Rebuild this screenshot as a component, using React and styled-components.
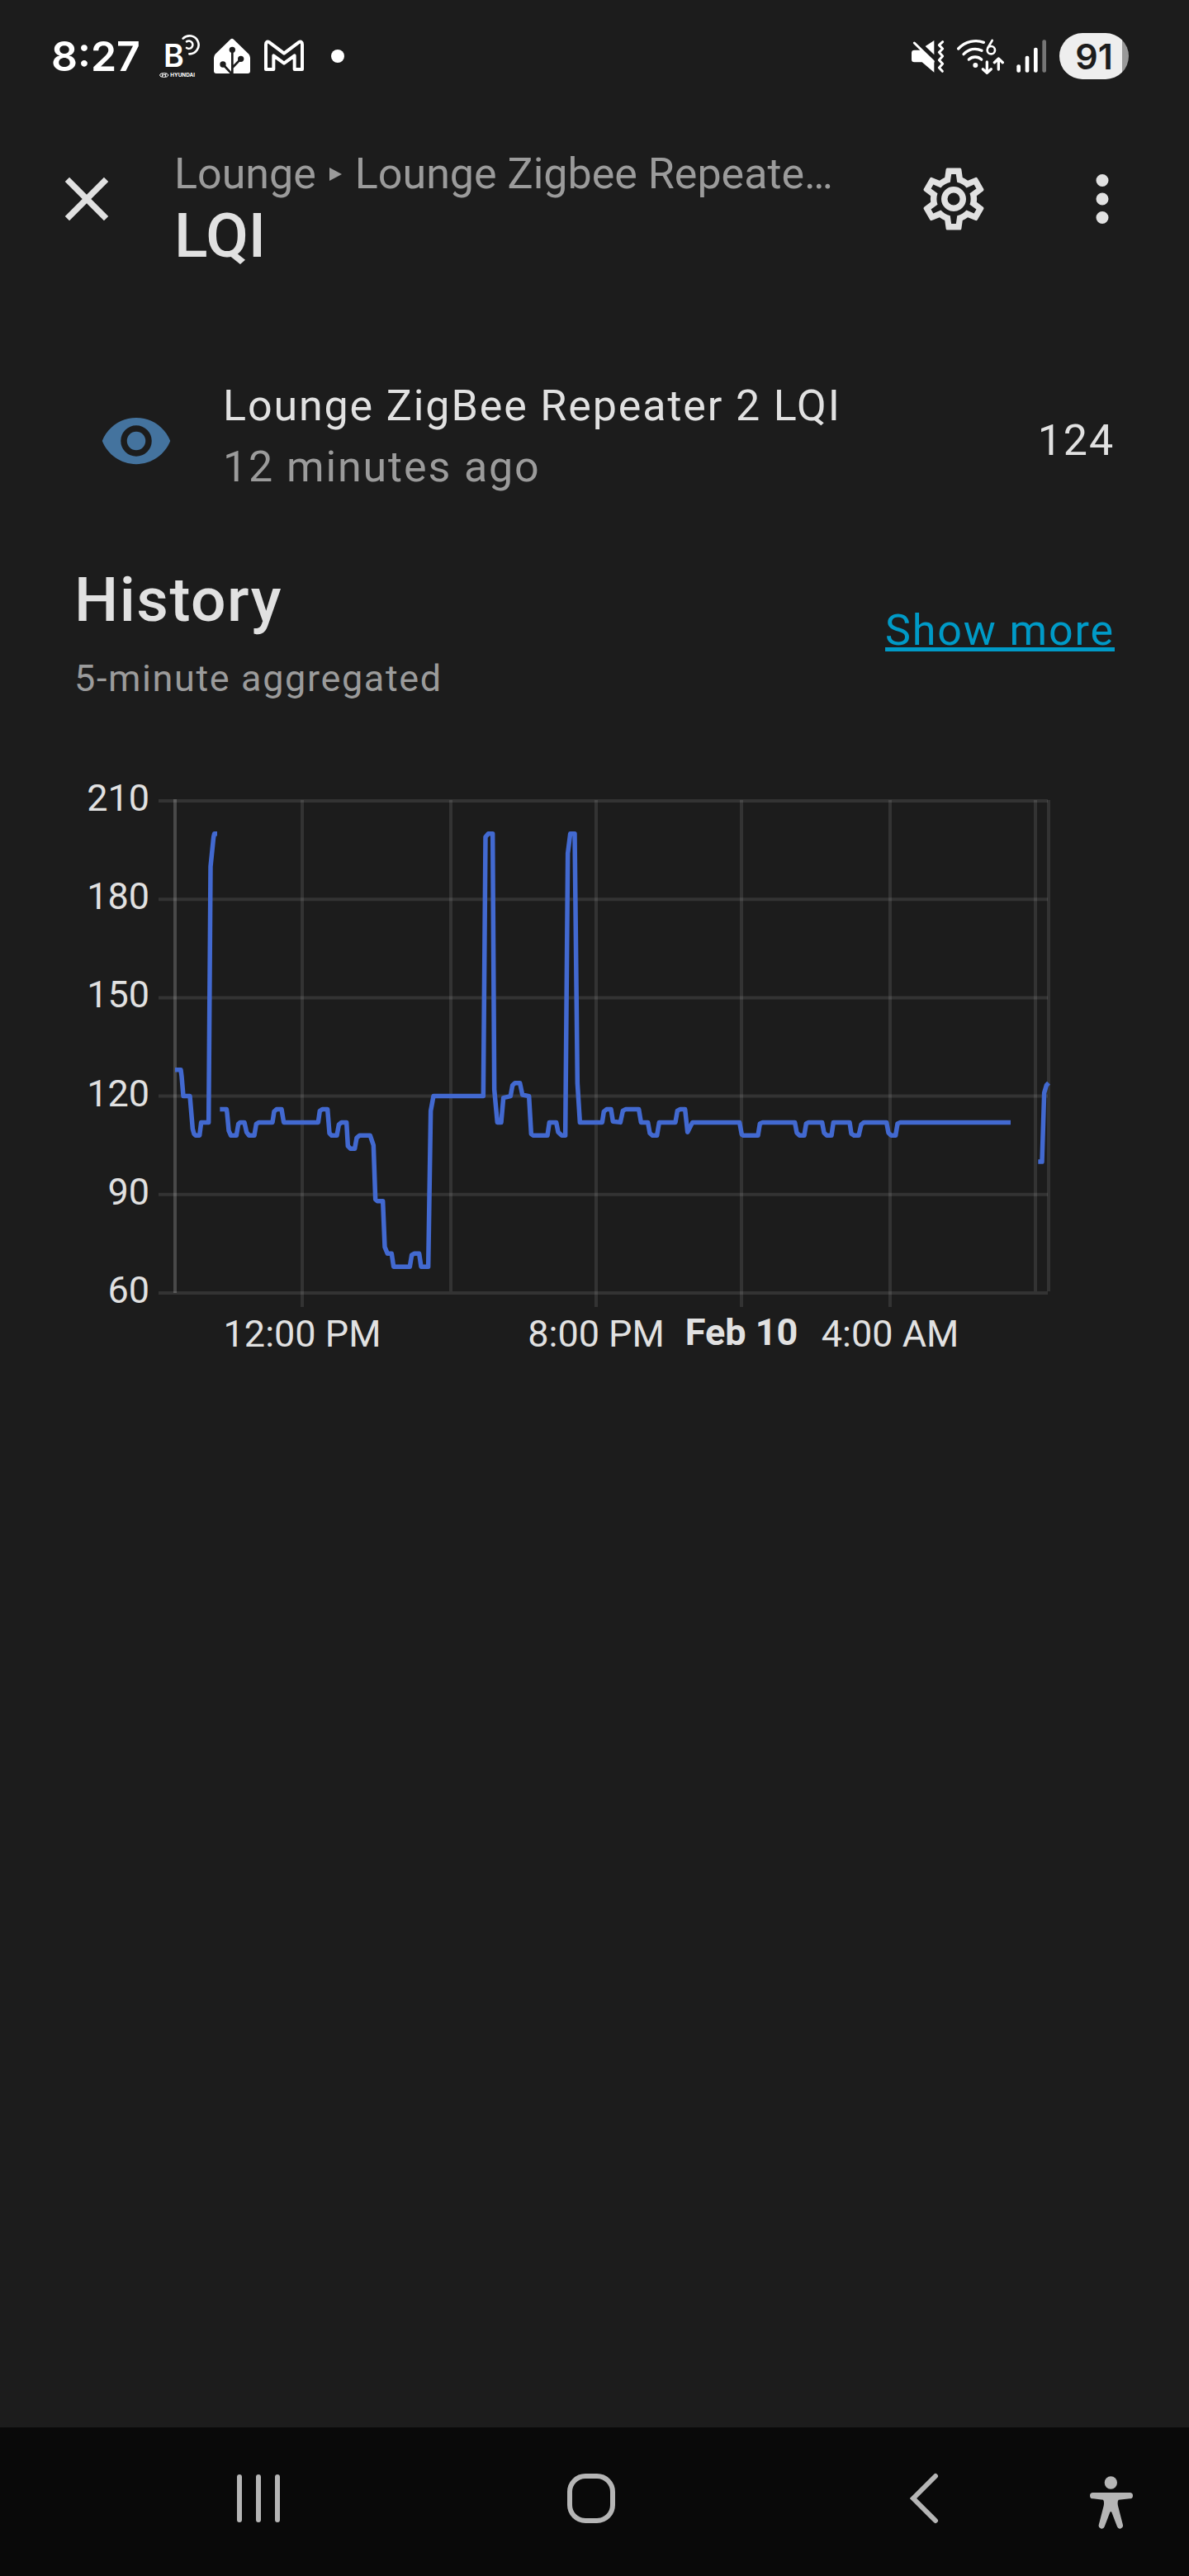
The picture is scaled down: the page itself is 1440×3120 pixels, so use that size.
import styled, { createGlobalStyle } from "styled-components";

const GlobalStyle = createGlobalStyle`
  * {
    box-sizing: border-box;
  }
  body {
    margin: 0;
    background: #1c1c1c;
    color: #e1e1e1;
    font-family: Roboto, sans-serif;
  }
`;

const Screen = styled.div`
  min-height: 100vh;
  display: flex;
  flex-direction: column;
`;

const StatusBar = styled.div`
  height: 136px;
  padding: 0 73px 0 62px;
  display: flex;
  align-items: center;
  justify-content: space-between;
  color: #fff;
`;

const StatusGroup = styled.div`
  display: flex;
  align-items: center;
  gap: ${(props) => props.$gap}px;
`;

const Clock = styled.span`
  margin-right: 6px;
  font-family: Inter, sans-serif;
  font-size: 50px;
  font-weight: 600;
  line-height: 56px;
`;

const Dot = styled.span`
  width: 16px;
  height: 16px;
  margin-left: 16px;
  border-radius: 50%;
  background: #fff;
`;

const Battery = styled.span`
  width: 84px;
  height: 56px;
  border-radius: 28px;
  background: linear-gradient(to right, #eee 76px, #999 76px);
  color: #1c1c1c;
  font-family: Inter, sans-serif;
  font-size: 43px;
  font-weight: 600;
  line-height: 56px;
  text-align: center;
`;

const Header = styled.header`
  height: 210px;
  padding: 0 15px;
  display: flex;
  align-items: center;
`;

const IconButton = styled.button`
  width: 180px;
  height: 180px;
  flex: none;
  display: flex;
  align-items: center;
  justify-content: center;
  padding: 0;
  border: none;
  background: none;
  color: inherit;
  cursor: pointer;
`;

const Titles = styled.div`
  flex: 1;
  min-width: 0;
  padding: 16px 16px 0;
`;

const Breadcrumb = styled.div`
  display: flex;
  align-items: center;
  gap: 16px;
  color: #9b9b9b;
  font-size: 52px;
  line-height: 72px;
  white-space: nowrap;
`;

const Title = styled.h1`
  margin: 0;
  font-size: 75px;
  font-weight: 500;
  line-height: 76px;
`;

const Content = styled.main`
  flex: 1;
  padding: 109px 90px 0;
`;

const StateRow = styled.section`
  display: flex;
  align-items: center;
  font-size: 52px;
  line-height: 74px;
  letter-spacing: 0.036em;
`;

const Badge = styled.div`
  width: 150px;
  flex: none;
  display: flex;
  justify-content: center;
  color: #44739e;
`;

const StateInfo = styled.div`
  flex: 1;
  padding: 0 0 10px 30px;
`;

const Ago = styled.div`
  color: #9b9b9b;
`;

const HistoryHead = styled.section`
  margin-top: 55px;
  display: flex;
  align-items: center;
  justify-content: space-between;
`;

const HistoryTitle = styled.h2`
  margin: 0;
  font-size: 75px;
  font-weight: 500;
  line-height: 116px;
  letter-spacing: 0.02em;
`;

const Aggregated = styled.div`
  color: #9b9b9b;
  font-size: 45px;
  line-height: 76px;
  letter-spacing: 0.036em;
`;

const MoreLink = styled.a`
  color: #009ac7;
  font-size: 52px;
  line-height: 74px;
  letter-spacing: 0.036em;
  text-decoration-thickness: 5px;
`;

const ChartSvg = styled.svg`
  display: block;
  width: 100%;
  margin-top: 80px;
  font-size: 45px;
`;

const NavBar = styled.nav`
  height: 180px;
  padding: 0 68px 8px 111px;
  display: grid;
  grid-template-columns: repeat(3, 1fr) 52px;
  align-items: center;
  justify-items: center;
  background: #090909;
`;

const NavButton = styled.button`
  height: 120px;
  display: flex;
  align-items: center;
  padding: 0;
  border: none;
  background: none;
  color: #b5b5b5;
  cursor: pointer;
`;

const ICONS = {
  close:
    "M19,6.41L17.59,5L12,10.59L6.41,5L5,6.41L10.59,12L5,17.59L6.41,19L12,13.41L17.59,19L19,17.59L13.41,12L19,6.41Z",
  cog: "M12,8A4,4 0 0,1 16,12A4,4 0 0,1 12,16A4,4 0 0,1 8,12A4,4 0 0,1 12,8M12,10A2,2 0 0,0 10,12A2,2 0 0,0 12,14A2,2 0 0,0 14,12A2,2 0 0,0 12,10M10,22C9.75,22 9.54,21.82 9.5,21.58L9.13,18.93C8.5,18.68 7.96,18.34 7.44,17.94L4.95,18.95C4.73,19.03 4.46,18.95 4.34,18.73L2.34,15.27C2.21,15.05 2.27,14.78 2.46,14.63L4.57,12.97L4.5,12L4.57,11L2.46,9.37C2.27,9.22 2.21,8.95 2.34,8.73L4.34,5.27C4.46,5.05 4.73,4.96 4.95,5.05L7.44,6.05C7.96,5.66 8.5,5.32 9.13,5.07L9.5,2.42C9.54,2.18 9.75,2 10,2H14C14.25,2 14.46,2.18 14.5,2.42L14.87,5.07C15.5,5.32 16.04,5.66 16.56,6.05L19.05,5.05C19.27,4.96 19.54,5.05 19.66,5.27L21.66,8.73C21.79,8.95 21.73,9.22 21.54,9.37L19.43,11L19.5,12L19.43,13L21.54,14.63C21.73,14.78 21.79,15.05 21.66,15.27L19.66,18.73C19.54,18.95 19.27,19.04 19.05,18.95L16.56,17.95C16.04,18.34 15.5,18.68 14.87,18.93L14.5,21.58C14.46,21.82 14.25,22 14,22H10M11.25,4L10.88,6.61C9.68,6.86 8.62,7.5 7.85,8.39L5.44,7.35L4.69,8.65L6.8,10.2C6.4,11.37 6.4,12.64 6.8,13.8L4.68,15.36L5.43,16.66L7.86,15.62C8.63,16.5 9.68,17.14 10.87,17.38L11.24,20H12.76L13.13,17.39C14.32,17.14 15.37,16.5 16.14,15.62L18.57,16.66L19.32,15.36L17.2,13.81C17.6,12.64 17.6,11.37 17.2,10.2L19.31,8.65L18.56,7.35L16.15,8.39C15.38,7.5 14.32,6.86 13.12,6.62L12.75,4H11.25Z",
  dots: "M12,16A2,2 0 0,1 14,18A2,2 0 0,1 12,20A2,2 0 0,1 10,18A2,2 0 0,1 12,16M12,10A2,2 0 0,1 14,12A2,2 0 0,1 12,14A2,2 0 0,1 10,12A2,2 0 0,1 12,10M12,4A2,2 0 0,1 14,6A2,2 0 0,1 12,8A2,2 0 0,1 10,6A2,2 0 0,1 12,4Z",
  eye: "M12,9A3,3 0 0,0 9,12A3,3 0 0,0 12,15A3,3 0 0,0 15,12A3,3 0 0,0 12,9M12,17A5,5 0 0,1 7,12A5,5 0 0,1 12,7A5,5 0 0,1 17,12A5,5 0 0,1 12,17M12,4.5C7,4.5 2.73,7.61 1,12C2.73,16.39 7,19.5 12,19.5C17,19.5 21.27,16.39 23,12C21.27,7.61 17,4.5 12,4.5Z",
};

const Icon = ({ name }) => (
  <svg width="90" height="90" viewBox="0 0 24 24" fill="currentColor" aria-hidden="true">
    <path d={ICONS[name]} />
  </svg>
);

const BluelinkIcon = () => (
  <svg width="49" height="56" viewBox="0 0 147 168" fill="none" stroke="#fff" aria-hidden="true">
    <text x="15" y="122" fill="#fff" stroke="none" fontFamily="Inter" fontSize="113" fontWeight="600">B</text>
    <path d="M86 20A33 33 0 1 1 109 76" strokeWidth="8" strokeLinecap="round" />
    <path d="M99 31A14 14 0 1 1 99 54" strokeWidth="8" strokeLinecap="round" />
    <ellipse cx="17" cy="153" rx="15" ry="7" strokeWidth="3" />
    <path d="M12 147L10 159M24 147L22 159M11 154Q17 150 23 152" strokeWidth="3" />
    <text x="40" y="160" fill="#fff" stroke="none" fontFamily="Inter" fontSize="19" fontWeight="700">HYUNDAI</text>
  </svg>
);

const HomeIcon = () => (
  <svg width="44" height="56" viewBox="0 0 132 168" aria-hidden="true">
    <path d="M60 23Q66 18 72 23L126 76Q132 82 132 90V138Q132 147 123 147H9Q0 147 0 138V90Q0 82 6 76Z" fill="#fff" />
    <g stroke="#1c1c1c" strokeWidth="8" fill="none">
      <path d="M67 62V148M33 114L65 148M98 94L67 126" />
    </g>
    <g fill="#1c1c1c">
      <circle cx="67" cy="61" r="11" />
      <circle cx="33" cy="114" r="11" />
      <circle cx="98" cy="94" r="11" />
    </g>
  </svg>
);

const MailIcon = () => (
  <svg width="48" height="56" viewBox="0 0 144 168" aria-hidden="true">
    <path
      d="M6 42Q6 27 19 34L72 74L125 34Q138 27 138 42V132H110V82L72 110L34 82V132H6Z"
      fill="none"
      stroke="#fff"
      strokeWidth="12"
      strokeLinejoin="round"
    />
  </svg>
);

const MutedIcon = () => (
  <svg width="40" height="56" viewBox="0 0 120 168" fill="#fff" aria-hidden="true">
    <path d="M10 62H36L82 106V143L38 106H10Q0 106 0 96V72Q0 62 10 62ZM50 48L82 27V79Z" />
    <path d="M10 36L79 103" stroke="#fff" strokeWidth="9" strokeLinecap="round" />
    <path
      d="M113 32L100 44L113 57L100 70L113 84L100 98L113 112L100 126L112 139"
      fill="none"
      stroke="#fff"
      strokeWidth="9"
      strokeLinecap="round"
      strokeLinejoin="round"
    />
  </svg>
);

const WifiIcon = () => (
  <svg width="57" height="56" viewBox="0 0 171 168" fill="none" stroke="#fff" strokeWidth="10" strokeLinecap="round" aria-hidden="true">
    <path d="M5 57C30 30 68 23 97 34" />
    <path d="M24 77C43 58 68 53 90 64" />
    <path d="M43 96C56 84 76 84 89 96" />
    <circle cx="67" cy="117" r="9" fill="#fff" stroke="none" />
    <path d="M128 27L112 54" strokeWidth="8" />
    <circle cx="124" cy="62" r="14" strokeWidth="8" />
    <path d="M109 105V144M94 131L109 145L124 131" strokeLinejoin="round" />
    <path d="M151 132V95M136 107L151 93L166 107" strokeLinejoin="round" />
  </svg>
);

const SignalIcon = () => (
  <svg width="37" height="56" viewBox="0 0 111 168" fill="#fff" aria-hidden="true">
    <rect x="1" y="115" width="14" height="28" rx="6" />
    <rect x="32" y="83" width="14" height="60" rx="6" />
    <rect x="63" y="53" width="14" height="90" rx="6" />
    <rect x="94" y="25" width="14" height="118" rx="6" opacity="0.4" />
  </svg>
);

// Chart geometry. Samples are [time, lqi] with three time units to a pixel.
const PLOT = { left: 122, right: 1179, top: 30, bottom: 626 };
const Y_TICKS = [210, 180, 150, 120, 90, 60];
const X_TICKS = [
  { x: 276, label: "12:00 PM" },
  { x: 456 },
  { x: 632, label: "8:00 PM" },
  { x: 808, label: "Feb 10", bold: true },
  { x: 988, label: "4:00 AM" },
  { x: 1164 },
];

const SERIES = [
  [
    [0, 128], [21, 128], [24, 126], [30, 120], [54, 120], [64, 110], [69, 108.5], [75, 108], [89, 108],
    [95, 112], [122, 112], [129, 190], [140, 199], [143, 200], [153, 200],
  ],
  [
    [163, 116], [187, 116], [189, 115], [195, 109.5], [203, 108], [223, 108], [230, 111.5], [237, 112],
    [252, 112], [260, 109], [269, 108], [288, 108], [295, 111.5], [305, 112], [354, 112], [360, 115.3],
    [369, 116], [387, 116], [395, 112], [520, 112], [526, 115.5], [535, 116], [554, 116], [561, 108.7],
    [569, 108], [588, 108], [595, 111.3], [605, 112], [623, 112], [628, 104.8], [637, 104], [653, 104],
    [660, 107.3], [670, 108], [709, 108], [721, 105], [728, 88.5], [735, 88], [755, 88], [762, 74],
    [772, 72], [787, 72], [794, 68], [853, 68], [860, 71.6], [870, 72], [887, 72], [894, 68], [920, 68],
    [929, 115.5], [939, 120], [1120, 120], [1128, 199], [1138, 200], [1154, 200], [1160, 122],
    [1171, 112], [1185, 112], [1193, 119.5], [1219, 120], [1226, 123.3], [1235, 124], [1253, 124],
    [1262, 120.4], [1286, 120], [1294, 108.5], [1301, 108], [1353, 108], [1360, 112], [1385, 112],
    [1392, 109], [1405, 108], [1418, 108], [1427, 194], [1436, 200], [1452, 200], [1462, 124],
    [1471, 112], [1552, 112], [1558, 115.3], [1568, 116], [1584, 116], [1591, 112.3], [1618, 112],
    [1627, 115.5], [1637, 116], [1685, 116], [1693, 112], [1718, 112], [1725, 108.7], [1735, 108],
    [1751, 108], [1759, 112], [1818, 112], [1825, 115.5], [1835, 116], [1853, 116], [1862, 109],
    [1880, 112], [2051, 112], [2059, 108.3], [2065, 108], [2118, 108], [2125, 111.6], [2135, 112],
    [2252, 112], [2259, 108.8], [2269, 108], [2286, 108], [2293, 111.6], [2302, 112], [2351, 112],
    [2358, 108.8], [2368, 108], [2385, 108], [2392, 112], [2451, 112], [2457, 108.6], [2467, 108],
    [2484, 108], [2493, 111.3], [2503, 112], [2585, 112], [2592, 108.8], [2602, 108], [2618, 108],
    [2625, 111.6], [2635, 112], [3036, 112],
  ],
  [
    [3136, 100], [3150, 100], [3158, 121], [3166, 123.3], [3174, 124],
  ],
];

const toX = (time) => PLOT.left + time / 3;
const toY = (value) => PLOT.bottom - ((value - 60) * (PLOT.bottom - PLOT.top)) / 150;

const HistoryChart = () => (
  <ChartSvg viewBox="0 0 1260 710" role="img" aria-label="LQI history">
    <g stroke="#e1e1e1" strokeOpacity="0.12" strokeWidth="4">
      {Y_TICKS.map((tick) => (
        <line key={tick} x1={PLOT.left - 20} x2={PLOT.right} y1={toY(tick)} y2={toY(tick)} />
      ))}
      {X_TICKS.map((tick) => (
        <line key={tick.x} x1={tick.x} x2={tick.x} y1={PLOT.top - 1} y2={PLOT.bottom + (tick.label ? 17 : -2)} />
      ))}
      <line x1={PLOT.left} x2={PLOT.left} y1={PLOT.top - 2} y2={PLOT.bottom} strokeOpacity="0.23" />
      <line x1={PLOT.right + 1} x2={PLOT.right + 1} y1={PLOT.top - 1} y2={PLOT.bottom - 2} />
    </g>
    <g fill="#e1e1e1">
      {Y_TICKS.map((tick) => (
        <text key={tick} x="91" y={toY(tick) + 12} textAnchor="end">{tick}</text>
      ))}
      {X_TICKS.filter((tick) => tick.label).map((tick) => (
        <text key={tick.x} x={tick.x} y={tick.bold ? 689 : 691} textAnchor="middle" fontWeight={tick.bold ? 700 : 400}>
          {tick.label}
        </text>
      ))}
    </g>
    <g fill="none" stroke="#4269d0" strokeWidth="5.5" strokeLinejoin="round">
      {SERIES.map((points, i) => (
        <polyline key={i} points={points.map(([time, value]) => `${toX(time)},${toY(value)}`).join(" ")} />
      ))}
    </g>
  </ChartSvg>
);

const App = () => {
  return (
    <>
      <GlobalStyle />
      <Screen>
        <StatusBar>
          <StatusGroup $gap={17}>
            <Clock>8:27</Clock>
            <BluelinkIcon />
            <HomeIcon />
            <MailIcon />
            <Dot />
          </StatusGroup>
          <StatusGroup $gap={15}>
            <MutedIcon />
            <WifiIcon />
            <SignalIcon />
            <Battery>91</Battery>
          </StatusGroup>
        </StatusBar>
        <Header>
          <IconButton aria-label="Close">
            <Icon name="close" />
          </IconButton>
          <Titles>
            <Breadcrumb>
              <span>Lounge</span>
              <svg width="15" height="16" viewBox="0 0 15 16" fill="currentColor" aria-hidden="true">
                <path d="M0 0L15 8L0 16Z" />
              </svg>
              <span>Lounge Zigbee Repeate…</span>
            </Breadcrumb>
            <Title>LQI</Title>
          </Titles>
          <IconButton aria-label="Settings">
            <Icon name="cog" />
          </IconButton>
          <IconButton aria-label="More options">
            <Icon name="dots" />
          </IconButton>
        </Header>
        <Content>
          <StateRow>
            <Badge>
              <Icon name="eye" />
            </Badge>
            <StateInfo>
              <div>Lounge ZigBee Repeater 2 LQI</div>
              <Ago>12 minutes ago</Ago>
            </StateInfo>
            <div>124</div>
          </StateRow>
          <HistoryHead>
            <div>
              <HistoryTitle>History</HistoryTitle>
              <Aggregated>5-minute aggregated</Aggregated>
            </div>
            <MoreLink href="#history">Show more</MoreLink>
          </HistoryHead>
          <HistoryChart />
        </Content>
        <NavBar>
          <NavButton aria-label="Recent apps">
            <svg width="54" height="60" viewBox="0 0 54 60" stroke="currentColor" strokeWidth="6" strokeLinecap="round">
              <path d="M4 4V56M27 4V56M50 4V56" />
            </svg>
          </NavButton>
          <NavButton aria-label="Home">
            <svg width="60" height="62" viewBox="0 0 60 62" fill="none" stroke="currentColor" strokeWidth="6">
              <rect x="4" y="4" width="52" height="54" rx="19" />
            </svg>
          </NavButton>
          <NavButton aria-label="Back">
            <svg width="36" height="62" viewBox="0 0 36 62" fill="none" stroke="currentColor" strokeWidth="6" strokeLinecap="round" strokeLinejoin="miter">
              <path d="M32 4L5 31L32 58" />
            </svg>
          </NavButton>
          <NavButton aria-label="Accessibility">
            <svg width="52" height="74" viewBox="0 -30 156 222" fill="currentColor">
              <circle cx="76" cy="24" r="23" />
              <path d="M11 60H145A11 11 0 0 1 145 82L104 86Q99 92 102 108L120 178A11 11 0 0 1 99 184L79 131Q76 127 73 131L53 184A11 11 0 0 1 32 178L50 108Q53 92 48 86L11 82A11 11 0 0 1 11 60Z" />
            </svg>
          </NavButton>
        </NavBar>
      </Screen>
    </>
  );
};

export default App;
